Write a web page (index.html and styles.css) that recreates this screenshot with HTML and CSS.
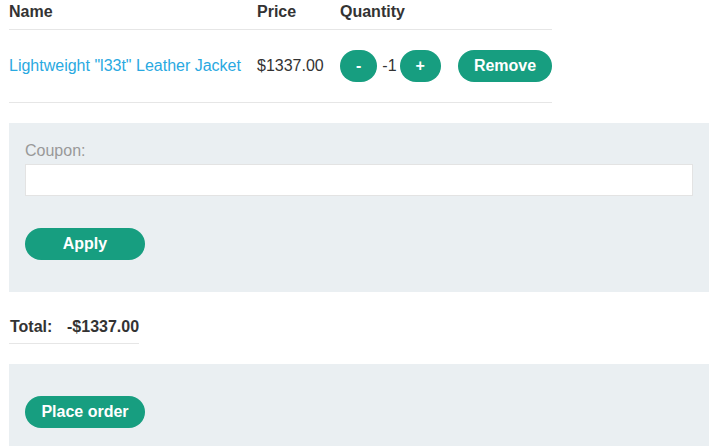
FILE: index.html
```html
<!DOCTYPE html>
<html>
<head>
<meta charset="utf-8">
<link rel="stylesheet" href="styles.css">
</head>
<body>
<div class="page">
  <div class="cart">
    <div class="row head">
      <div class="cell">Name</div>
      <div class="cell">Price</div>
      <div class="cell">Quantity</div>
    </div>
    <div class="row item">
      <div class="cell"><a class="link" href="#">Lightweight "l33t" Leather Jacket</a></div>
      <div class="cell">$1337.00</div>
      <div class="cell qty">
        <button class="btn">-</button>
        <span class="count">-1</span>
        <button class="btn">+</button>
        <button class="btn remove">Remove</button>
      </div>
    </div>
  </div>

  <div class="panel coupon">
    <label class="label">Coupon:</label>
    <input class="input" type="text">
    <button class="btn wide">Apply</button>
  </div>

  <div class="total">
    <span class="total-label">Total:</span>
    <span class="total-value">-$1337.00</span>
  </div>

  <div class="panel order">
    <button class="btn wide">Place order</button>
  </div>
</div>
</body>
</html>
```

FILE: styles.css
```css
html, body {
  margin: 0;
  padding: 0;
  background: #ffffff;
}
body {
  font-family: "Liberation Sans", Arial, sans-serif;
  font-size: 16px;
  color: #333333;
}
.page {
  padding: 0 13px 0 9px;
}
.cart {
  width: 543px;
}
.row {
  display: grid;
  grid-template-columns: 248px 83px 1fr;
  border-bottom: 1px solid #e6e6e6;
  align-items: center;
}
.head .cell {
  font-weight: bold;
  line-height: 18px;
  padding: 3px 0 8px 0;
}
.item {
  padding: 20px 0;
}
.item .cell {
  line-height: 18px;
}
.link {
  color: #29a9e1;
  text-decoration: none;
}
.qty {
  display: flex;
  align-items: center;
}
.btn {
  font-family: "Liberation Sans", Arial, sans-serif;
  font-size: 16px;
  font-weight: bold;
  color: #ffffff;
  background: #179e80;
  border: none;
  border-radius: 16px;
  height: 32px;
  padding: 0 16px;
  line-height: 32px;
  cursor: pointer;
}
.count {
  margin: 0 3px 0 5px;
}
.remove {
  margin-left: 17px;
}
.panel {
  background: #eaeff2;
  padding: 32px 16px;
  margin-top: 20px;
}
.coupon {
  display: flex;
  flex-direction: column;
  align-items: flex-start;
  padding-top: 16px;
}
.label {
  color: #999999;
  line-height: 24px;
}
.input {
  box-sizing: border-box;
  width: 100%;
  height: 32px;
  margin: 1px 0 32px 0;
  border: 1px solid #e3e3e3;
  background: #ffffff;
  padding: 0 8px;
  font-size: 16px;
}
.wide {
  min-width: 120px;
}
.total {
  display: inline-flex;
  margin-top: 20px;
  padding: 6px 0 7px 0;
  border-bottom: 1px solid #e6e6e6;
  font-weight: bold;
  line-height: 18px;
}
.total-label {
  padding-left: 1px;
  width: 57px;
}
.order {
  padding-bottom: 40px;
}
```
